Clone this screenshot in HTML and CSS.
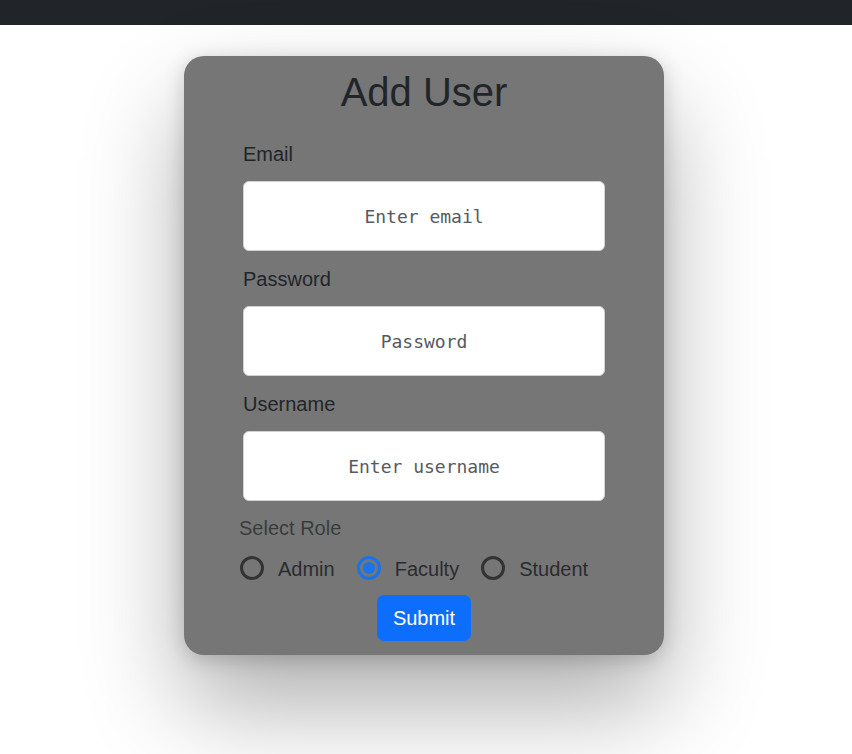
FILE: index.html
```html
<!DOCTYPE html>
<html lang="en">
<head>
<meta charset="utf-8">
<title>Add User</title>
<link rel="stylesheet" href="styles.css">
</head>
<body>
<nav class="navbar"></nav>
<main class="page">
  <form class="card">
    <h1 class="title">Add User</h1>
    <div class="fields">
      <div class="field">
        <label class="label" for="email">Email</label>
        <input class="input" id="email" type="email" placeholder="Enter email">
      </div>
      <div class="field">
        <label class="label" for="password">Password</label>
        <input class="input" id="password" type="password" placeholder="Password">
      </div>
      <div class="field">
        <label class="label" for="username">Username</label>
        <input class="input" id="username" type="text" placeholder="Enter username">
      </div>
      <div class="role-title">Select Role</div>
      <div class="roles">
        <label class="role"><input class="radio" type="radio" name="role" value="admin"><span>Admin</span></label>
        <label class="role"><input class="radio" type="radio" name="role" value="faculty" checked><span>Faculty</span></label>
        <label class="role"><input class="radio" type="radio" name="role" value="student"><span>Student</span></label>
      </div>
      <div class="actions">
        <button class="btn" type="button">Submit</button>
      </div>
    </div>
  </form>
</main>
</body>
</html>
```

FILE: styles.css
```css
* { box-sizing: border-box; }
html, body { margin: 0; padding: 0; }
body {
  background: #ffffff;
  font-family: "Liberation Sans", Arial, sans-serif;
  color: #212529;
  overflow: hidden;
  height: 754px;
}
.navbar {
  height: 25px;
  background: #212529;
}
.page {
  display: flex;
  justify-content: center;
  padding-top: 31px;
  padding-right: 4px;
}
.card {
  width: 480px;
  background: #767676;
  border-radius: 20px;
  padding: 12px 55px 14px;
  box-shadow: 0 4px 20px rgba(0, 0, 0, 0.18), 0 50px 100px rgba(0, 0, 0, 0.32);
}
.title {
  margin: 0;
  font-size: 40px;
  font-weight: 400;
  line-height: 48px;
  text-align: center;
  color: #212529;
}
.fields {
  margin-top: 23px;
  display: flex;
  flex-direction: column;
}
.field {
  display: flex;
  flex-direction: column;
  padding: 0 0 0 4px;
  margin-bottom: 13px;
}
.field:nth-child(3) { margin-bottom: 12px; }
.label {
  font-size: 20px;
  line-height: 30px;
  margin-bottom: 12px;
  color: #212529;
}
.input {
  width: 362px;
  height: 70px;
  border: 1px solid #cfd2d6;
  border-radius: 6px;
  background: #fff;
  text-align: center;
  font-family: "DejaVu Sans Mono", monospace;
  font-size: 18px;
  color: #212529;
  outline: none;
  padding: 0 12px;
}
.input::placeholder { color: #555a60; opacity: 1; }
.role-title {
  font-size: 20px;
  line-height: 30px;
  color: rgba(33, 37, 41, 0.72);
}
.roles {
  display: flex;
  align-items: center;
  margin-top: 10px;
  height: 30px;
  padding-left: 1px;
}
.role {
  display: flex;
  align-items: center;
  font-size: 20px;
  line-height: 30px;
  color: #2a2c2f;
  margin-right: 22px;
}
.role span { position: relative; top: 1px; }
.radio {
  appearance: none;
  -webkit-appearance: none;
  width: 24px;
  height: 24px;
  margin: 0 14px 0 0;
  border: 3px solid #333333;
  border-radius: 50%;
  background: transparent;
  display: grid;
  place-items: center;
}
.radio:checked {
  border-color: #1a73e8;
}
.radio:checked::after {
  content: "";
  width: 12px;
  height: 12px;
  border-radius: 50%;
  background: #1a73e8;
}
.actions {
  display: flex;
  justify-content: center;
  margin-top: 12px;
}
.btn {
  font-family: "Liberation Sans", Arial, sans-serif;
  font-size: 20px;
  line-height: 30px;
  padding: 8px 16px;
  border: 0;
  border-radius: 7px;
  background: #0d6efd;
  color: #fff;
}
```
